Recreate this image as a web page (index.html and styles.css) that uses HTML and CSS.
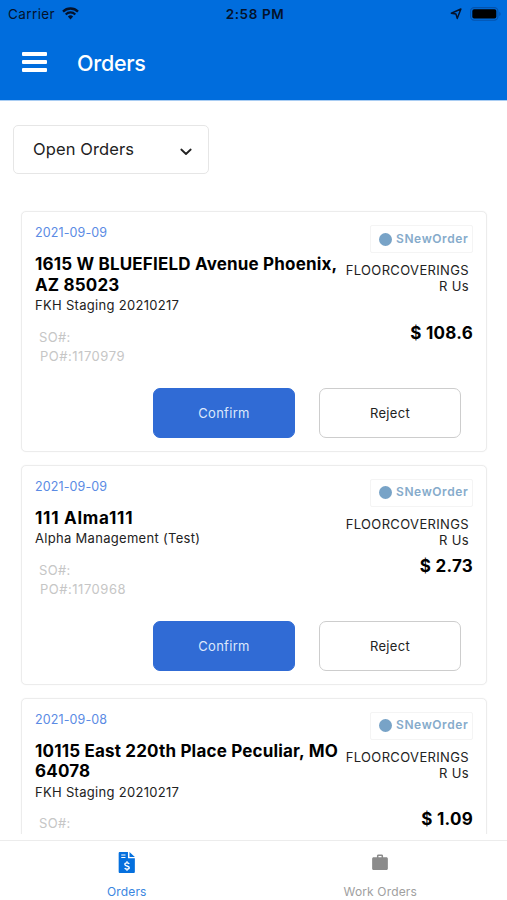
FILE: index.html
```html
<!DOCTYPE html>
<html lang="en">

<head>
    <meta charset="UTF-8">
    <meta name="viewport" content="width=device-width, initial-scale=1.0">
    <title>Orders</title>
    <link rel="stylesheet" href="styles.css">
</head>

<body>
    <div class="app">
        <header class="header">
            <div class="status-bar">
                <div class="status-left">
                    <span class="carrier">Carrier</span>
                    <svg class="wifi" width="17" height="13" viewBox="0 0 17 13" fill="none" stroke="#04122b">
                        <path d="M1 4.6a10.6 10.6 0 0 1 15 0" stroke-width="2.3" />
                        <path d="M3.7 7.4a6.8 6.8 0 0 1 9.6 0" stroke-width="2.1" />
                        <path d="M8.5 12.4L5.9 9.6a3.7 3.7 0 0 1 5.2 0z" fill="#04122b" stroke="none" />
                    </svg>
                </div>
                <div class="time">2:58 PM</div>
                <div class="status-right">
                    <svg width="12" height="12" viewBox="0 0 12 12" fill="none" stroke="#04122b" stroke-width="1.5" stroke-linejoin="round">
                        <path d="M10.9 1L7.2 10.4 6 6.1 1.3 5.2z" />
                    </svg>
                    <svg width="32" height="14" viewBox="0 0 32 14">
                        <rect x="0.6" y="0.6" width="27.3" height="12.6" rx="3.6" fill="none" stroke="#0453ad" stroke-width="1.1" />
                        <rect x="2.3" y="2.3" width="24" height="9.2" rx="1.8" fill="#000" />
                        <path d="M29.3 4.8c1.8.8 1.8 3.5 0 4.3z" fill="#0453ad" />
                    </svg>
                </div>
            </div>
            <div class="nav-bar">
                <div class="menu">
                    <span></span>
                    <span></span>
                    <span></span>
                </div>
                <h1 class="page-title">Orders</h1>
            </div>
        </header>

        <main class="content">
            <div class="filter">
                <span>Open Orders</span>
                <svg width="12" height="8" viewBox="0 0 12 8" fill="none" stroke="#222" stroke-width="1.8" stroke-linecap="round" stroke-linejoin="round">
                    <path d="M1.3 1.5L6 6l4.7-4.5" />
                </svg>
            </div>

            <div class="order-list">
                <div class="card">
                    <div class="card-top">
                        <div class="info">
                            <div class="date">2021-09-09</div>
                            <h2 class="address">1615 W BLUEFIELD Avenue Phoenix,<br>AZ 85023</h2>
                            <div class="client">FKH Staging 20210217</div>
                        </div>
                        <div class="side">
                            <div class="badge"><i class="dot"></i><span>SNewOrder</span></div>
                            <div class="vendor">FLOORCOVERINGS<br>R Us</div>
                        </div>
                    </div>
                    <div class="card-mid">
                        <div class="numbers">
                            <div class="so">SO#:</div>
                            <div class="po">PO#:1170979</div>
                        </div>
                        <div class="price">$ 108.6</div>
                    </div>
                    <div class="actions">
                        <button class="btn confirm">Confirm</button>
                        <button class="btn reject">Reject</button>
                    </div>
                </div>

                <div class="card">
                    <div class="card-top">
                        <div class="info">
                            <div class="date">2021-09-09</div>
                            <h2 class="address short">111 Alma111</h2>
                            <div class="client">Alpha Management (Test)</div>
                        </div>
                        <div class="side">
                            <div class="badge"><i class="dot"></i><span>SNewOrder</span></div>
                            <div class="vendor">FLOORCOVERINGS<br>R Us</div>
                        </div>
                    </div>
                    <div class="card-mid">
                        <div class="numbers">
                            <div class="so">SO#:</div>
                            <div class="po">PO#:1170968</div>
                        </div>
                        <div class="price">$ 2.73</div>
                    </div>
                    <div class="actions">
                        <button class="btn confirm">Confirm</button>
                        <button class="btn reject">Reject</button>
                    </div>
                </div>

                <div class="card">
                    <div class="card-top">
                        <div class="info">
                            <div class="date">2021-09-08</div>
                            <h2 class="address">10115 East 220th Place Peculiar, MO<br>64078</h2>
                            <div class="client">FKH Staging 20210217</div>
                        </div>
                        <div class="side">
                            <div class="badge"><i class="dot"></i><span>SNewOrder</span></div>
                            <div class="vendor">FLOORCOVERINGS<br>R Us</div>
                        </div>
                    </div>
                    <div class="card-mid">
                        <div class="numbers">
                            <div class="so">SO#:</div>
                        </div>
                        <div class="price">$ 1.09</div>
                    </div>
                </div>
            </div>
        </main>

        <nav class="tab-bar">
            <div class="tab active">
                <svg width="18" height="24" viewBox="0 0 18 24">
                    <path fill="#0570de" d="M1.6 1H10v6.6h7.2v14.1c0 .8-.5 1.3-1.3 1.3H1.6C.8 23 .3 22.5.3 21.7V2.3C.3 1.5.8 1 1.6 1zM11.6 1l5.6 5.2h-5.6z" />
                    <path stroke="#fff" stroke-width="1.1" d="M3 4.2h4.4M3 6.7h4.4" />
                    <path fill="none" stroke="#fff" stroke-width="1.5" d="M11.3 13.5c-.5-.8-1.3-1.1-2.3-1.1-3 0-3 2.7 0 3.3 3.2.6 3 3.3 0 3.3-1.1 0-1.9-.4-2.4-1.2M9 10.8v1.6M9 19v1.6" />
                </svg>
                <span>Orders</span>
            </div>
            <div class="tab">
                <svg width="18" height="24" viewBox="0 0 18 24">
                    <path fill="#8b8b8b" fill-rule="evenodd" d="M5.8 6.5V5.2c0-.9.6-1.5 1.5-1.5h3.4c.9 0 1.5.6 1.5 1.5v1.3h3.4c1 0 1.6.6 1.6 1.6v10.1c0 1-.6 1.6-1.6 1.6H2.4c-1 0-1.6-.6-1.6-1.6V8.1c0-1 .6-1.6 1.6-1.6zM7.4 6.5h3.2V5.2H7.4z" />
                </svg>
                <span>Work Orders</span>
            </div>
        </nav>
    </div>
</body>

</html>
```
FILE: styles.css
```css
* {
    box-sizing: border-box;
}

body {
    margin: 0;
    background: #fff;
    font-family: Inter, "Liberation Sans", sans-serif;
    color: #222;
}

.app {
    display: flex;
    flex-direction: column;
    height: 900px;
    overflow: hidden;
}

/* header */
.header {
    flex: none;
    height: 100px;
    background: #006ddd;
    box-shadow: 0 1px 0 #a9cdf3;
}

.status-bar {
    display: grid;
    grid-template-columns: 1fr auto 1fr;
    align-items: center;
    height: 27px;
    padding: 0 5px 0 8px;
    color: #04122b;
    font-size: 13.5px;
}

.status-left,
.status-right {
    display: flex;
    align-items: center;
}

.status-left {
    gap: 7px;
}

.status-right {
    justify-content: flex-end;
    gap: 8px;
}

.carrier {
    letter-spacing: 0.4px;
}

.time {
    font-weight: 600;
    letter-spacing: 0.6px;
}

.nav-bar {
    display: flex;
    align-items: center;
    height: 69px;
    padding-left: 22px;
    gap: 30px;
}

.menu {
    display: flex;
    flex-direction: column;
    gap: 4px;
    width: 25px;
}

.menu span {
    height: 4px;
    border-radius: 1px;
    background: #fff;
}

.page-title {
    margin: 2px 0 0;
    color: #fff;
    font-size: 21.5px;
    font-weight: 500;
    letter-spacing: -0.25px;
}

/* filter and list */
.content {
    flex: none;
    height: 734px;
    padding: 25px 20px 0 13px;
    overflow: hidden;
}

.filter {
    display: flex;
    justify-content: space-between;
    align-items: center;
    width: 196px;
    height: 49px;
    padding: 0 16px 1px 19px;
    border: 1.5px solid #e6e6e6;
    border-radius: 5px;
    font-size: 16.5px;
    letter-spacing: 0.1px;
}

.filter svg {
    margin-top: 5px;
}

.order-list {
    display: flex;
    flex-direction: column;
    gap: 13px;
    padding: 37px 0 0 8px;
}

.card {
    flex: none;
    padding: 11px 13px 13px;
    border: 1px solid #ececec;
    border-radius: 5px;
    box-shadow: 0 0 1px #e4e4e4;
}

.card-top {
    display: flex;
    justify-content: space-between;
}

.info {
    white-space: nowrap;
}

.date {
    height: 31px;
    color: #5b8be4;
    font-size: 12.5px;
    letter-spacing: 0.12px;
    line-height: 20px;
}

.address {
    margin: 0;
    color: #000;
    font-size: 17px;
    font-weight: 700;
    letter-spacing: 0.18px;
    line-height: 20.5px;
}

.address.short {
    letter-spacing: 0.75px;
}

.client {
    font-size: 13px;
    letter-spacing: 0.3px;
    line-height: 21px;
}

.side {
    display: flex;
    flex-direction: column;
    align-items: flex-end;
    width: 0;
    height: 85px;
    margin-bottom: -15px;
    padding-top: 2px;
    white-space: nowrap;
}

.badge {
    display: flex;
    flex: none;
    align-items: center;
    gap: 4px;
    width: 103px;
    height: 28px;
    padding-left: 8px;
    border: 1px solid #f4f4f4;
    border-radius: 2px;
    color: #86abcb;
    font-size: 12px;
    font-weight: 600;
    letter-spacing: 0.6px;
}

.badge span {
    padding-bottom: 2px;
}

.dot {
    width: 13px;
    height: 13px;
    border-radius: 50%;
    background: #78a3c7;
}

.vendor {
    margin-top: 9px;
    padding-right: 4px;
    font-size: 13px;
    letter-spacing: 0.35px;
    line-height: 16px;
    text-align: right;
}

.card-mid {
    display: flex;
    justify-content: space-between;
    height: 51px;
    margin-top: 11.5px;
}

.numbers {
    padding-left: 4px;
    color: #c6c6c6;
    font-size: 13px;
    line-height: 19px;
}

.so {
    letter-spacing: 0.3px;
}

.po {
    padding-left: 1px;
    letter-spacing: 0.52px;
}

.price {
    color: #000;
    font-size: 17px;
    font-weight: 700;
    letter-spacing: 0.25px;
    line-height: 10px;
}

.actions {
    display: flex;
    justify-content: flex-end;
    gap: 24px;
    margin-top: 9px;
    padding-right: 12px;
}

.btn {
    width: 142px;
    height: 50px;
    padding: 1px 0 0;
    border: 1.5px solid #cdcdcd;
    border-radius: 7px;
    background: #fff;
    color: #222;
    font-family: inherit;
    font-size: 13px;
    letter-spacing: 0.3px;
}

.confirm {
    border-color: #306bd5;
    background: #306bd5;
    color: #dce8fb;
}

/* bottom tabs */
.tab-bar {
    display: flex;
    flex: none;
    height: 60px;
    margin-top: 6px;
    border-top: 1px solid #ececec;
}

.tab {
    display: flex;
    flex: 1;
    flex-direction: column;
    align-items: center;
    padding-top: 10px;
    gap: 10px;
    color: #a0a0a0;
    font-size: 12px;
    letter-spacing: 0.15px;
    line-height: 16px;
}

.tab.active {
    color: #3a86df;
}
```
